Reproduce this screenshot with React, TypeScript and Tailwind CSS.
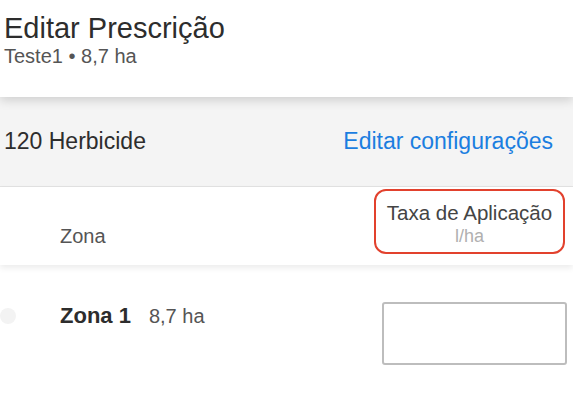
import React from 'react'

const font = { fontFamily: '"Liberation Sans", Arial, sans-serif' }

export default function App() {
  return (
    <div className="w-[573px] h-[413px] overflow-hidden bg-white text-[#333]" style={font}>
      {/* Title */}
      <div className="relative z-10 h-[97px] pl-[4px] pt-[11px] bg-white shadow-[0_3px_10px_rgba(0,0,0,0.16)]">
        <h1 className="text-[29px] leading-[34px] text-[#2d2d2d]">Editar Prescrição</h1>
        <p className="text-[20px] leading-[22px] text-[#555]">Teste1 • 8,7 ha</p>
      </div>

      {/* Product band */}
      <div className="h-[90px] flex items-center justify-between bg-[#f4f4f4] pl-[4px] pr-[20px] border-b border-[#e2e2e2]">
        <span className="text-[23px] text-[#2d2d2d]">120 Herbicide</span>
        <button className="text-[23px] text-[#1b7ee0]">Editar configurações</button>
      </div>

      {/* Column headers */}
      <div className="relative z-10 h-[78px] flex items-center justify-between pl-[60px] pr-[8px] bg-white shadow-[0_3px_6px_rgba(0,0,0,0.08)]">
        <span className="self-end mb-[14px] text-[20px] text-[#555]">Zona</span>
        <div className="w-[191px] h-[65px] mt-[-10px] pt-[6px] flex flex-col items-center justify-center rounded-[12px] border-2 border-[#e2412d]">
          <span className="text-[20.5px] leading-[24px] text-[#444]">Taxa de Aplicação</span>
          <span className="text-[18px] leading-[22px] text-[#b0b0b0]">l/ha</span>
        </div>
      </div>

      {/* Zone row */}
      <div className="h-[148px] flex items-start justify-between pr-[6px] pt-[37px]">
        <div className="flex items-center h-[28px]">
          <span className="w-[16px] h-[16px] rounded-full bg-[#f3f3f3]" />
          <span className="ml-[44px] text-[22px] leading-[28px] font-bold text-[#2d2d2d]">Zona 1</span>
          <span className="ml-[18px] text-[20px] leading-[28px] text-[#555]">8,7 ha</span>
        </div>
        <input className="w-[185px] h-[63px] rounded-[3px] border-2 border-[#bdbdbd] outline-none" />
      </div>
    </div>
  )
}
